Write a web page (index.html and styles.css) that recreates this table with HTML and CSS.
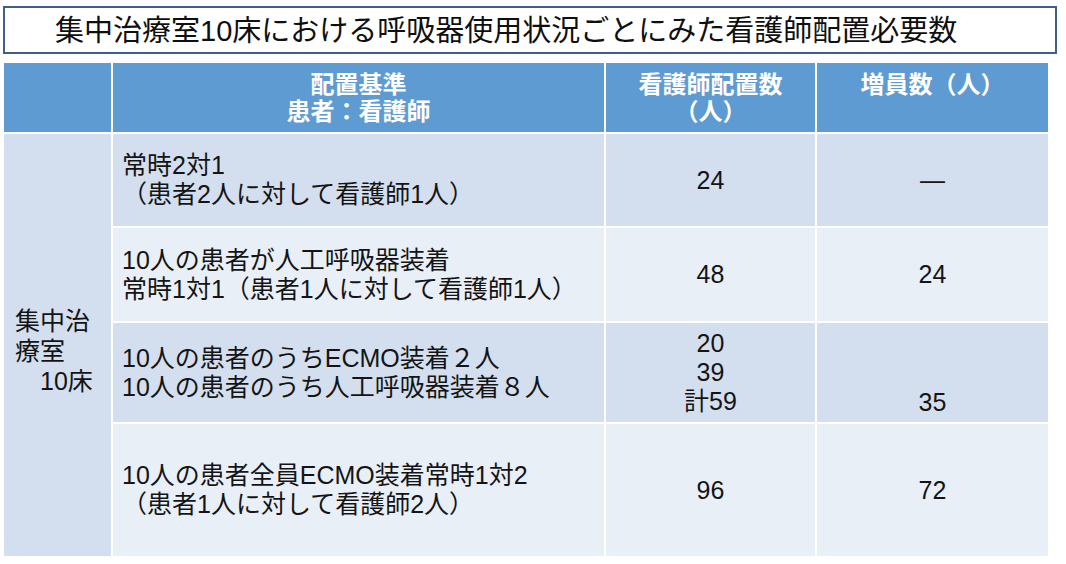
FILE: index.html
```html
<!DOCTYPE html>
<html lang="ja">
<head>
<meta charset="utf-8">
<title>集中治療室10床における呼吸器使用状況ごとにみた看護師配置必要数</title>
<link rel="stylesheet" href="styles.css">
</head>
<body>
<div class="title">集中治療室10床における呼吸器使用状況ごとにみた看護師配置必要数</div>
<table class="staff">
  <colgroup>
    <col class="c1"><col class="c2"><col class="c3"><col class="c4">
  </colgroup>
  <thead>
    <tr class="head">
      <th></th>
      <th>配置基準<br>患者：看護師</th>
      <th>看護師配置数<br>（人）</th>
      <th>増員数（人）</th>
    </tr>
  </thead>
  <tbody>
    <tr class="r1">
      <td class="unit" rowspan="4">集中治<br>療室<br>　10床</td>
      <td class="desc">常時2対1<br>（患者2人に対して看護師1人）</td>
      <td class="num">24</td>
      <td class="num">—</td>
    </tr>
    <tr class="r2">
      <td class="desc">10人の患者が人工呼吸器装着<br>常時1対1（患者1人に対して看護師1人）</td>
      <td class="num">48</td>
      <td class="num">24</td>
    </tr>
    <tr class="r3">
      <td class="desc">10人の患者のうちECMO装着２人<br>10人の患者のうち人工呼吸器装着８人</td>
      <td class="num">20<br>39<br>計59</td>
      <td class="num bottom">35</td>
    </tr>
    <tr class="r4">
      <td class="desc">10人の患者全員ECMO装着常時1対2<br>（患者1人に対して看護師2人）</td>
      <td class="num">96</td>
      <td class="num">72</td>
    </tr>
  </tbody>
</table>
</body>
</html>
```

FILE: styles.css
```css
* { box-sizing: border-box; }
html, body {
  margin: 0;
  padding: 0;
  background: #ffffff;
}
body {
  font-family: "Liberation Sans", "Noto Sans CJK JP", sans-serif;
  color: #141414;
  width: 1066px;
  height: 564px;
  overflow: hidden;
}
.title {
  margin: 6px 0 0 3px;
  width: 1054px;
  height: 48px;
  border: 2px solid #3f5f86;
  padding-left: 50px;
  font-size: 29px;
  line-height: 46px;
  color: #0f0f0f;
  white-space: nowrap;
}
.staff {
  margin: 7px 0 0 2px;
  border-collapse: separate;
  border-spacing: 2px;
  table-layout: fixed;
  width: 1048px;
  font-size: 25px;
}
.c1 { width: 107px; }
.c2 { width: 491px; }
.c3 { width: 209px; }
.c4 { width: 231px; }
.head th {
  background: #5e9bd2;
  color: #ffffff;
  font-weight: bold;
  font-size: 24px;
  height: 69px;
  vertical-align: top;
  padding: 8px 0 0;
  line-height: 27px;
  text-align: center;
}
td {
  padding: 0;
  line-height: 29px;
  vertical-align: middle;
}
.r1 td, .r3 td { background: #d3dfee; }
.r2 td, .r4 td { background: #e9eff7; }
.r1 td { height: 92px; }
.r2 td { height: 93px; }
.r3 td { height: 99px; }
.r4 td { height: 132px; }
.staff td.unit {
  background: #d3dfee;
  padding: 12px 0 0 11px;
  line-height: 30px;
}
.desc {
  padding-left: 9px;
  white-space: nowrap;
}
.num {
  text-align: center;
}
.num.bottom {
  vertical-align: bottom;
  padding-bottom: 5px;
}
```
